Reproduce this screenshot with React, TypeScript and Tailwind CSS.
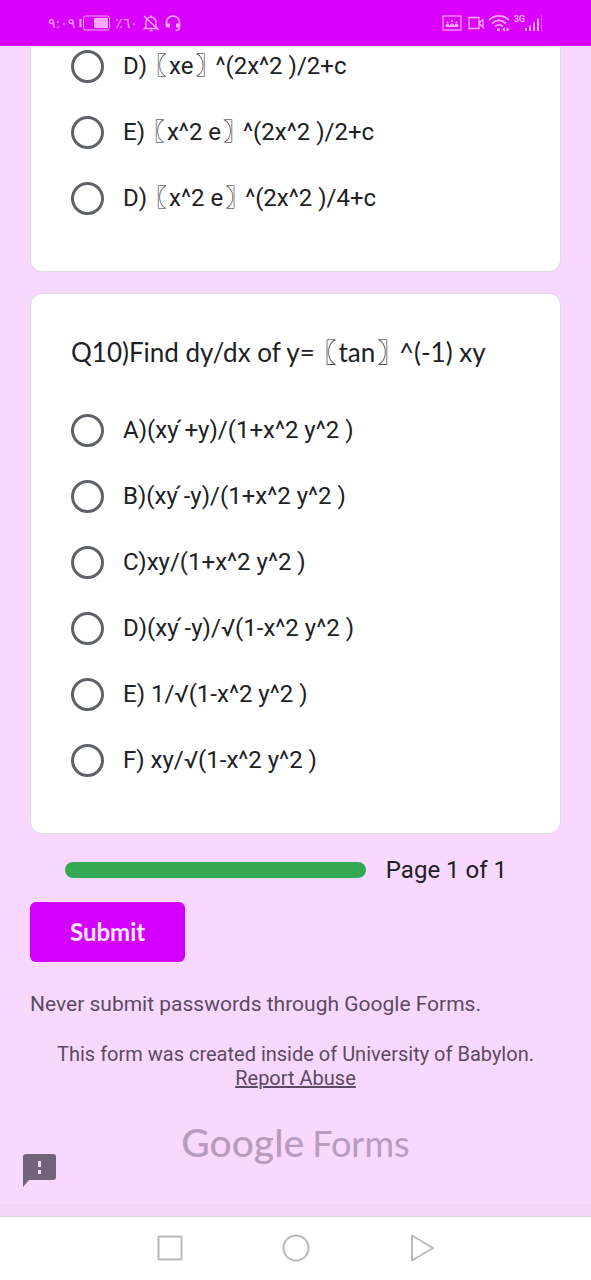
import React, { useState } from 'react';

type QuestionProps = {
  name: string;
  title?: string;
  options: string[];
};

const previousOptions = ['D) 〖xe〗 ^(2x^2 )/2+c', 'E) 〖x^2 e〗 ^(2x^2 )/2+c', 'D) 〖x^2 e〗 ^(2x^2 )/4+c'];

const derivativeOptions = [
  'A)(xy \u0301+y)/(1+x^2 y^2 )',
  'B)(xy \u0301-y)/(1+x^2 y^2 )',
  'C)xy/(1+x^2 y^2 )',
  'D)(xy \u0301-y)/√(1-x^2 y^2 )',
  'E) 1/√(1-x^2 y^2 )',
  'F) xy/√(1-x^2 y^2 )',
];

const StatusBar = () => (
  <header className="flex h-[46px] shrink-0 items-center justify-between bg-[#d900ff] px-12 text-[#f7a8ff]">
    <div className="flex items-center gap-1 font-['DejaVu_Sans',sans-serif] text-sm">
      <span>٩:٠٩</span>
      <svg className="h-4 w-8" viewBox="0 0 32 16" fill="none">
        <rect x="0.5" y="4" width="2" height="8" fill="currentColor" />
        <rect x="4.5" y="1" width="26" height="14" rx="2" stroke="currentColor" />
        <rect x="15" y="3" width="14" height="10" fill="currentColor" />
      </svg>
      <span>٪٦٠</span>
      <svg className="h-[18px] w-[18px]" viewBox="0 0 18 18" fill="none" stroke="currentColor" strokeWidth="1.4">
        <path d="M4 13V8a5 5 0 0 1 10 0v5l1.500 1.500H2.500L4 13zM9 3V1M7.500 16.500h3M2 2l14.500 14" />
      </svg>
      <svg className="h-[18px] w-[18px]" viewBox="0 0 18 18" fill="none" stroke="currentColor" strokeWidth="1.6">
        <path d="M2.500 13V8.500a6.500 6.500 0 0 1 13 0V13c0 2.500-1.500 3.500-4 3.500" />
        <path d="M4.500 9.500v4M13.500 9.500v4" strokeWidth="3" />
      </svg>
    </div>
    <div className="flex items-center gap-1">
      <svg className="h-4 w-5" viewBox="0 0 20 16" fill="none" stroke="currentColor" strokeWidth="1.2">
        <rect x="1" y="1" width="18" height="14" />
        <path d="M4 11h12" strokeWidth="2" />
        <path d="M4 11c0-2.500 3-2.500 3 0M8.500 11c0-3 3-3 3 0M13 11c0-2.500 3-2.500 3 0" />
        <path d="M5.500 6.500V8M10 5v2M14.500 6.500V8" strokeWidth="2" />
      </svg>
      <svg className="ml-0.5 h-4 w-4" viewBox="0 0 16 16" fill="none" stroke="currentColor" strokeWidth="1.3">
        <path d="M1 2.500h10v11H1zM11 8l4-3.500v8z" />
      </svg>
      <svg className="h-[18px] w-[22px]" viewBox="0 0 22 18" fill="none" stroke="currentColor" strokeWidth="1.8">
        <path d="M1 6c6-5.500 14-5.500 20 0M4 9.500c4.500-4 9.500-4 14 0M7 12.500c2.500-2 5.500-2 8 0" />
        <path d="M9 15.500h3" strokeWidth="2.500" />
        <path d="M17 13l-3 2.500 3 2zM18.500 13l3 2.500-3 2z" fill="currentColor" stroke="none" />
      </svg>
      <div className="flex items-start">
        <span className="font-['Roboto',sans-serif] text-[9px] leading-[10px] font-bold">3G</span>
        <svg className="h-[18px] w-[18px]" viewBox="0 0 18 18" fill="currentColor">
          <path d="M0 14h2v3H0zM4 11.500h2V17H4zM8 8.500h2V17H8zM12 4.500h2V17h-2z" />
          <path d="M16 1h1v16h-1z" opacity="0.5" />
        </svg>
      </div>
    </div>
  </header>
);

// Lenticular brackets are full width by default, "halt" sets them next to Latin text
const Formula = ({ text }: { text: string }) => (
  <>
    {text.split(/([〖〗])/).map((part, index) =>
      part === '〖' || part === '〗' ? (
        <span key={index} className="px-0.5 font-['Noto_Sans_CJK_JP',sans-serif] leading-none [font-feature-settings:'halt']">
          {part}
        </span>
      ) : (
        part
      )
    )}
  </>
);

const Question = ({ name, title, options }: QuestionProps) => {
  const [answer, setAnswer] = useState<string>('');

  return (
    <fieldset className="w-full min-w-0">
      {title && (
        <legend className="mb-[43px] font-['Lato',sans-serif] text-[26px] leading-9">
          <Formula text={title} />
        </legend>
      )}
      <div className="flex flex-col gap-8">
        {options.map((option) => (
          <label key={option} className="flex items-center gap-[19px] text-2xl leading-[34px]">
            <input
              type="radio"
              name={name}
              value={option}
              checked={answer === option}
              onChange={(e) => setAnswer(e.target.value)}
              className="h-[33px] w-[33px] shrink-0 appearance-none rounded-full border-3 border-[#5f6368] checked:bg-[#d900ff]"
            />
            <span>
              <Formula text={option} />
            </span>
          </label>
        ))}
      </div>
    </fieldset>
  );
};

const NavigationBar = () => (
  <nav className="flex h-16 shrink-0 items-center justify-center gap-[98px] border-t border-[#dcd0de] bg-white pb-0.5 text-[#b9b9b9]">
    <button type="button" aria-label="Recent apps">
      <svg className="h-7 w-7" viewBox="0 0 28 28" fill="none" stroke="currentColor" strokeWidth="2">
        <rect x="2.5" y="2.5" width="23" height="23" rx="1" />
      </svg>
    </button>
    <button type="button" aria-label="Home">
      <svg className="h-7 w-7" viewBox="0 0 28 28" fill="none" stroke="currentColor" strokeWidth="2">
        <circle cx="14" cy="14" r="12.5" />
      </svg>
    </button>
    <button type="button" aria-label="Back">
      <svg className="h-7 w-7" viewBox="0 0 28 28" fill="none" stroke="currentColor" strokeWidth="2" strokeLinejoin="round">
        <path d="M4 1.500v25L25 14z" />
      </svg>
    </button>
  </nav>
);

const App = () => {
  return (
    <div className="flex min-h-screen flex-col bg-[#f8d8fe] font-['Roboto',sans-serif] text-[#202124]">
      <StatusBar />
      <main className="relative flex grow flex-col px-[30px]">
        <section className="rounded-b-xl border border-t-0 border-[#dadce0] bg-white px-10 pt-[3px] pb-14">
          <Question name="q9" options={previousOptions} />
        </section>

        <section className="mt-[21px] rounded-xl border border-[#dadce0] bg-white px-10 pt-10 pb-14">
          <Question name="q10" title="Q10)Find dy/dx of y= 〖tan〗 ^(-1) xy" options={derivativeOptions} />
        </section>

        <div className="mt-5 flex items-center gap-5 pr-[54px] pl-[35px]">
          <div className="h-4 grow rounded-full bg-[#34a853]" role="progressbar" aria-label="Form progress" aria-valuenow={100} />
          <span className="text-2xl">Page 1 of 1</span>
        </div>

        <button
          type="submit"
          className="mt-4 h-[60px] self-start rounded-md bg-[#d400ff] px-10 font-['Lato',sans-serif] text-2xl font-bold text-[#fdeaff]"
        >
          Submit
        </button>

        <p className="mt-7 text-[21px] leading-7 text-[#5c4a62]">Never submit passwords through Google Forms.</p>
        <p className="mt-6 text-center text-xl leading-6 text-[#5c4a62]">
          This form was created inside of University of Babylon.
          <br />
          <a href="#report" className="underline">Report Abuse</a>
        </p>

        <div className="mt-7 flex items-baseline justify-center gap-2 font-['Lato',sans-serif] text-4xl leading-[48px] text-[#b89cc0]">
          <span className="text-[39px] font-medium">Google</span>
          <span>Forms</span>
        </div>

        <button type="button" aria-label="Report a problem" className="absolute bottom-[29px] left-[23px] text-[#73637a]">
          <svg className="h-[33px] w-[33px]" viewBox="0 0 33 33" fill="currentColor">
            <path fillRule="evenodd" d="M3 0h27a3 3 0 0 1 3 3v20a3 3 0 0 1-3 3H6l-6 7V3a3 3 0 0 1 3-3zM15 7v6h3V7zM15 16v4h3v-4z" />
          </svg>
        </button>
      </main>
      <div className="h-3 shrink-0 bg-[#f2d5f8] -mt-3" />
      <NavigationBar />
    </div>
  );
};

export default App;
